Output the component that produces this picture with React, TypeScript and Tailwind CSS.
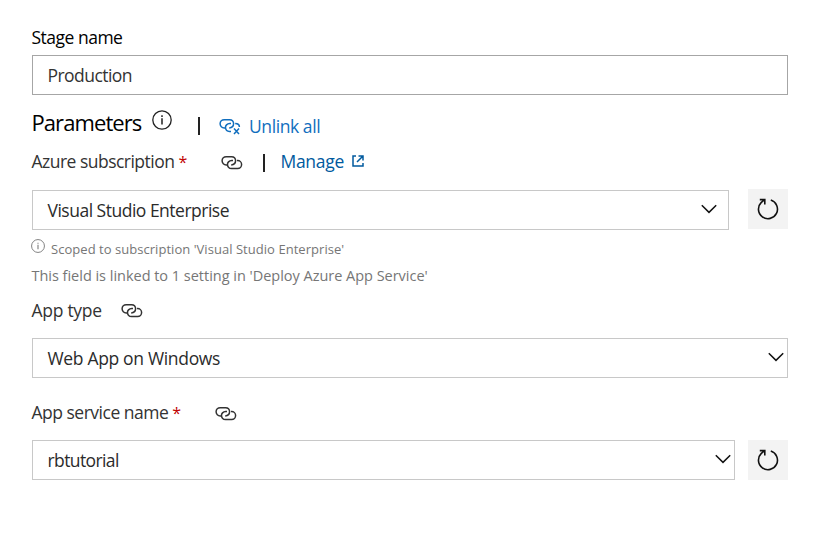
import type { ReactNode } from "react";

function Chain({ unlink = false, className = "" }: { unlink?: boolean; className?: string }) {
  return (
    <svg width="22" height="18" viewBox="0 0 22 18" fill="none" stroke="currentColor" strokeWidth="1.5" className={`shrink-0 ${className}`}>
      <path d="M6.2 10.9H5.2A4.1 4.1 0 0 1 5.2 2.7H10.6A4.1 4.1 0 0 1 14.6 6.6C14.6 9 12.8 10.8 10.2 10.9" />
      {unlink ? (
        <path d="M12 6.6H10.8C8 6.7 6.3 8.5 6.5 10.8C6.7 13 8.5 14.4 10.5 14.4H12M16.2 6.6C18.8 6.6 20.4 8 20.4 10" />
      ) : (
        <path d="M12 6.6H10.8C8 6.7 6.3 8.5 6.5 10.8C6.7 13 8.5 14.6 10.5 14.6H16.6A4 4 0 0 0 16.6 6.6H16" />
      )}
      {unlink && <path d="M15 11.5L20 17M20 11.5L15 17" />}
    </svg>
  );
}

function Info({ size, className = "" }: { size: number; className?: string }) {
  return (
    <svg width={size} height={size} viewBox="0 0 20 20" fill="none" stroke="currentColor" strokeWidth="1.3" className={`shrink-0 ${className}`}>
      <circle cx="10" cy="10" r="9.2" />
      <path d="M10 8.3V14.5M10 5.3V6.9" strokeWidth="1.5" />
    </svg>
  );
}

function Chevron() {
  return (
    <svg width="16" height="10" viewBox="0 0 16 10" fill="none" stroke="#111" strokeWidth="1.5" className="mb-0.5 shrink-0">
      <path d="M0.8 1.2L8 8.4L15.2 1.2" />
    </svg>
  );
}

function Refresh({ className = "" }: { className?: string }) {
  return (
    <button className={`flex h-10 w-10 shrink-0 items-center justify-center bg-[#f3f3f3] ${className}`}>
      <svg width="22" height="22" viewBox="0 0 22 22" fill="none" stroke="#111" strokeWidth="1.6">
        <path d="M13.8 2.1A9.5 9.5 0 1 1 4.3 4.4L7.8 1.6M2.8 1.6H7.8V6.4" />
      </svg>
    </button>
  );
}

function Required() {
  return <b className="ml-1 text-base font-normal text-[#c00000]">*</b>;
}

function Select({ children, className = "" }: { children: ReactNode; className?: string }) {
  return (
    <div className={`flex h-10 items-center justify-between border border-[#c8c8c8] pl-[14.5px] text-[#2b2b2b] ${className}`}>
      {children}
      <Chevron />
    </div>
  );
}

export default function App() {
  return (
    <main className="h-[537px] w-[818px] bg-white pr-[30px] pl-8 pt-[25px] font-['Open_Sans','Noto_Sans',sans-serif] text-[17.5px] leading-6 whitespace-nowrap text-[#333]">
      <div className="-ml-[0.5px] h-[30px] tracking-[-0.5px] text-black">Stage name</div>
      <div className="flex h-10 items-center border border-[#a6a6a6] pl-[14.5px] tracking-[-0.55px]">Production</div>
      <div className="flex h-[50px] items-center">
        <h2 className="-ml-[0.5px] mt-1 w-[120px] text-[22px] tracking-[-0.92px] text-black">Parameters</h2>
        <Info size={20} className="text-[#222]" />
        <i className="mt-3 ml-[26.5px] h-[18px] w-0.5 bg-[#222]" />
        <a className="mt-3 ml-[19px] flex items-center gap-2 text-[#106ebe]"><Chain unlink /><span className="tracking-[-0.42px]">Unlink all</span></a>
      </div>
      <div className="flex h-[45px] items-start pt-1">
        <label className="-ml-[0.5px] w-[189px]"><span className="tracking-[-0.52px]">Azure subscription</span><Required /></label>
        <Chain className="mt-[5px]" />
        <i className="mt-[5px] ml-5 h-[18px] w-0.5 bg-[#222]" />
        <a className="ml-4 flex items-center gap-2 text-[#005a9e]"><span className="tracking-[-0.3px]">Manage</span>
          <svg width="12" height="12" viewBox="0 0 12 12" fill="none" stroke="currentColor" strokeWidth="1.5"><path d="M4 1H1V11H11V8M6.5 1H11V5.5M11 1L5 7" /></svg>
        </a>
      </div>
      <div className="flex justify-between">
        <Select className="w-[697px] pr-[11px]"><span className="tracking-[-0.5px]">Visual Studio Enterprise</span></Select>
        <Refresh className="-mt-px" />
      </div>
      <div className="-ml-px flex h-[33px] items-center gap-1.5 pt-1 text-[13px] text-[#767676]"><Info size={14} className="mb-[5px]" /><span className="tracking-[0.04px]">Scoped to subscription 'Visual Studio Enterprise'</span></div>
      <div className="-ml-[0.5px] h-[35px] pt-px text-[14.5px] tracking-[-0.02px] text-[#767676]">This field is linked to 1 setting in 'Deploy Azure App Service'</div>
      <div className="flex h-10 items-start"><label className="-ml-[0.5px] w-[89.5px] tracking-[-0.28px]">App type</label><Chain className="mt-1" /></div>
      <Select className="pr-[3px]"><span className="tracking-[-0.33px]">Web App on Windows</span></Select>
      <div className="flex h-[62px] items-center pt-[7px]"><label className="-ml-[0.5px] w-[183px]"><span className="tracking-[-0.5px]">App service name</span><Required /></label><Chain className="mt-[3px]" /></div>
      <div className="flex justify-between">
        <Select className="w-[703px] pr-[3.5px]"><span className="tracking-[-0.6px]">rbtutorial</span></Select>
        <Refresh />
      </div>
    </main>
  );
}
